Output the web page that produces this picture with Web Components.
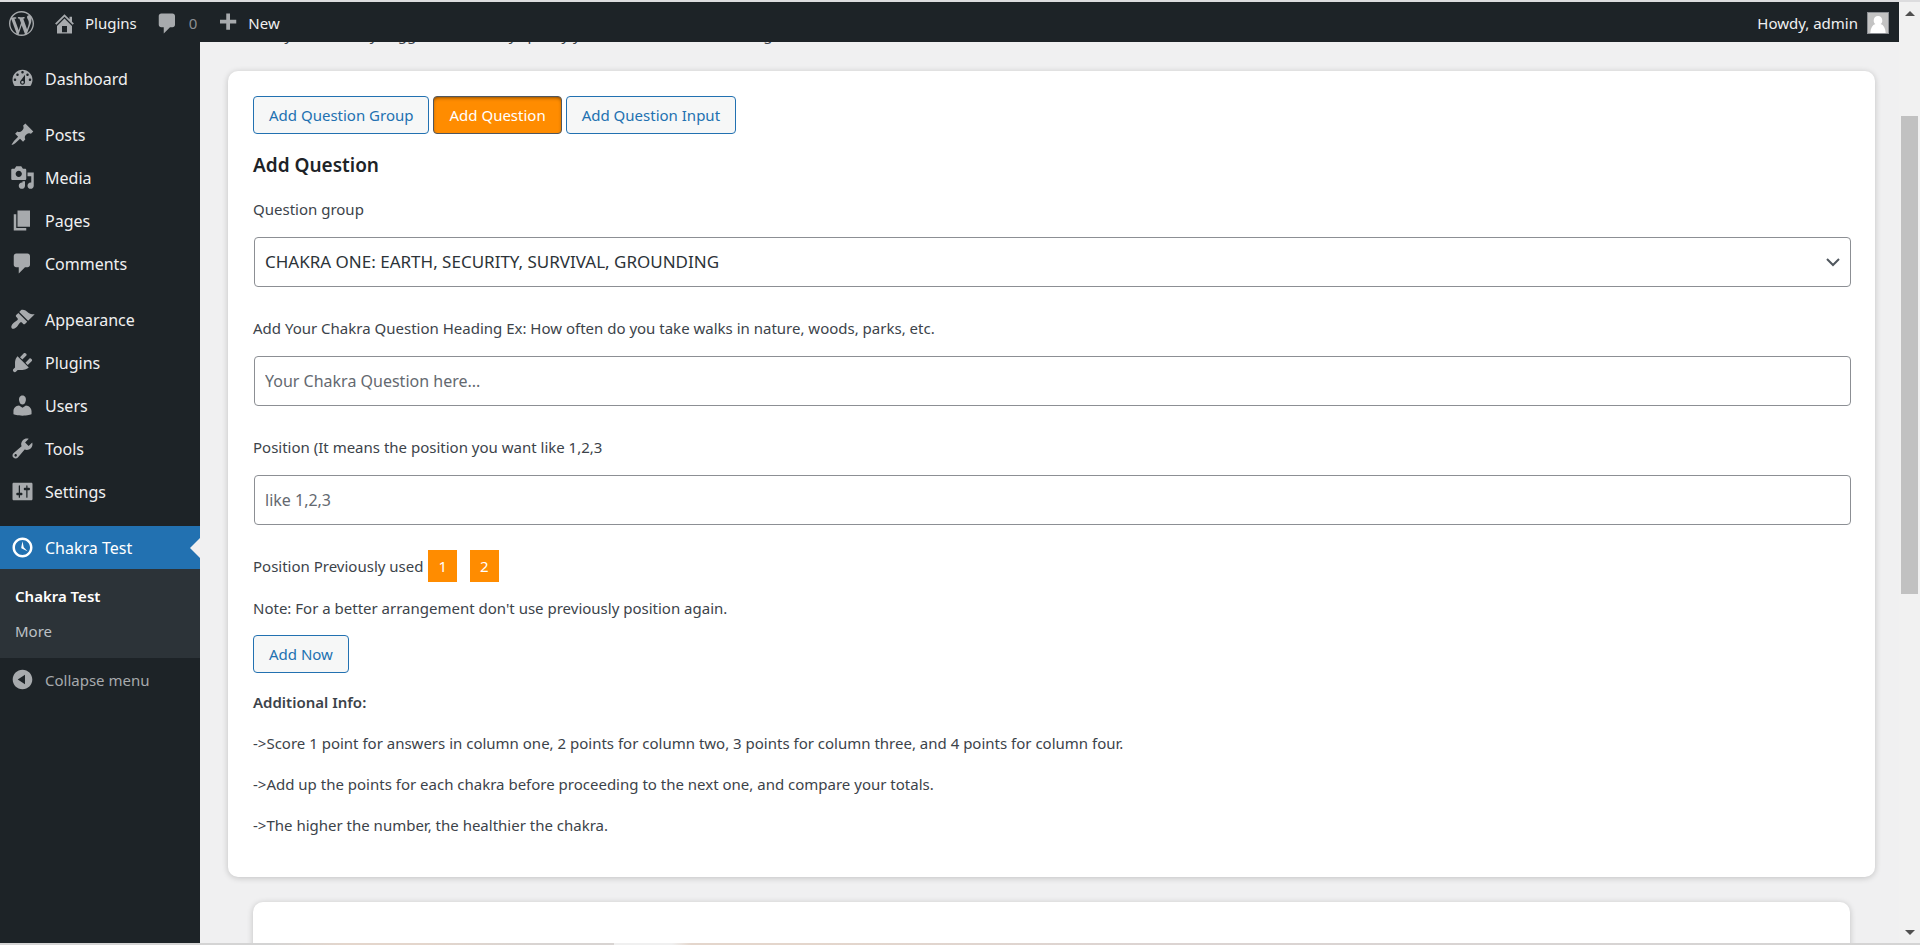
<!DOCTYPE html>
<html lang="en">
<head>
<meta charset="utf-8">
<title>Chakra Test</title>
<style>
	body {
		margin: 0;
		font-family: "Noto Sans", "Open Sans", sans-serif;
		font-size: 15px;
		line-height: 24px;
		color: #3c434a;
		background: #f0f0f1;
	}
</style>
</head>
<body>
<chakra-app></chakra-app>

<script>
const ICONS = {
	wordpress: 'M20 10c0-5.51-4.49-10-10-10C4.48 0 0 4.49 0 10c0 5.52 4.48 10 10 10 5.51 0 10-4.48 10-10zM7.78 15.37L4.37 6.22c.55-.02 1.17-.08 1.17-.08.5-.06.44-1.13-.06-1.11 0 0-1.45.11-2.37.11-.18 0-.37 0-.58-.01C4.12 2.69 6.87 1.11 10 1.11c2.33 0 4.45.87 6.05 2.34-.68-.11-1.65.39-1.65 1.58 0 .74.45 1.36.9 2.1.35.61.55 1.36.55 2.46 0 1.49-1.4 5-1.4 5l-3.03-8.37c.54-.02.82-.17.82-.17.5-.05.44-1.25-.06-1.22 0 0-1.44.12-2.38.12-.87 0-2.33-.12-2.33-.12-.5-.03-.56 1.2-.06 1.22l.92.08 1.26 3.41zM17.41 10c.24-.64.74-1.87.43-4.25.7 1.29 1.05 2.71 1.05 4.25 0 3.29-1.73 6.24-4.4 7.78.97-2.59 1.94-5.2 2.92-7.78zM6.1 18.09C3.12 16.65 1.11 13.53 1.11 10c0-1.3.23-2.48.72-3.59C3.25 10.3 4.67 14.2 6.1 18.09zm4.03-6.63l2.58 6.98c-.86.29-1.76.45-2.71.45-.79 0-1.57-.11-2.29-.33.81-2.38 1.62-4.74 2.42-7.1z',
	home: 'M16 8.5l1.53 1.53-1.06 1.06L10 4.6l-6.47 6.49-1.06-1.06L10 2.5l4 4v-2h2v4zm-6-2.46l6 5.99V18H4v-5.97zM12 17v-5H8v5h4z',
	comments: 'M5 2h9c1.1 0 2 .9 2 2v7c0 1.1-.9 2-2 2h-2l-5 5v-5H5c-1.1 0-2-.9-2-2V4c0-1.1.9-2 2-2z',
	plus: 'M17 7v3h-5v5H9v-5H4V7h5V2h3v5h5z',
	dashboard: 'M3.76 16h12.48c1.1-1.37 1.76-3.11 1.76-5 0-4.42-3.58-8-8-8s-8 3.58-8 8c0 1.89.66 3.63 1.76 5zM10 4c.55 0 1 .45 1 1s-.45 1-1 1-1-.45-1-1 .45-1 1-1zM6 6c.55 0 1 .45 1 1s-.45 1-1 1-1-.45-1-1 .45-1 1-1zm8 0c.55 0 1 .45 1 1s-.45 1-1 1-1-.45-1-1 .45-1 1-1zm-5.37 5.55L12 7v6c0 1.1-.9 2-2 2s-2-.9-2-2c0-.57.24-1.08.63-1.45zM4 10c.55 0 1 .45 1 1s-.45 1-1 1-1-.45-1-1 .45-1 1-1zm12 0c.55 0 1 .45 1 1s-.45 1-1 1-1-.45-1-1 .45-1 1-1zm-5 3c0-.55-.45-1-1-1s-1 .45-1 1 .45 1 1 1 1-.45 1-1z',
	posts: 'M10.44 3.02l1.82-1.82 6.36 6.35-1.83 1.82c-1.05-.68-2.48-.57-3.41.36l-.75.75c-.92.93-1.04 2.35-.35 3.41l-1.83 1.82-2.41-2.41-2.8 2.79c-.42.42-3.38 2.71-3.8 2.29s1.86-3.39 2.28-3.81l2.79-2.79L4.1 9.36l1.83-1.82c1.05.69 2.48.57 3.4-.36l.75-.75c.93-.92 1.05-2.35.36-3.41z',
	media: 'M13 11V4c0-.55-.45-1-1-1h-1.67L9 1H5L3.67 3H2c-.55 0-1 .45-1 1v7c0 .55.45 1 1 1h10c.55 0 1-.45 1-1zM7 4.5c1.38 0 2.5 1.12 2.5 2.5S8.38 9.5 7 9.5 4.5 8.38 4.5 7 5.62 4.5 7 4.5zM14 6h5v10.5c0 1.38-1.12 2.5-2.5 2.5S14 17.88 14 16.5s1.12-2.5 2.5-2.5c.17 0 .34.02.5.05V9h-3V6zm-4 8.05V13h2v3.5c0 1.38-1.12 2.5-2.5 2.5S7 17.88 7 16.5 8.12 14 9.5 14c.17 0 .34.02.5.05z',
	pages: 'M6 15V2h10v13H6zm-1 1h8v2H3V5h2v11z',
	appearance: 'M14.48 11.06L7.41 3.99l1.5-1.5c.5-.56 2.3-.47 3.51.32 1.21.8 1.43 1.28 2.91 2.1 1.18.64 2.45 1.26 4.45.85zm-.71.71L6.7 4.7 4.93 6.47c-.39.39-.39 1.02 0 1.41l1.06 1.06c.39.39.39 1.03 0 1.42-.6.6-1.43 1.11-2.21 1.69-.35.26-.7.53-1.01.84C1.43 14.23.4 16.08 1.4 17.07c.99 1 2.84-.03 4.18-1.36.31-.31.58-.66.85-1.02.57-.78 1.08-1.61 1.69-2.21.39-.39 1.02-.39 1.41 0l1.06 1.06c.39.39 1.02.39 1.41 0z',
	plugins: 'M13.11 4.36L9.87 7.6 8 5.73l3.24-3.24c.35-.34 1.05-.2 1.56.32.52.51.66 1.21.31 1.55zm-8 1.77l.91-1.12 9.01 9.01-1.19.84c-.71.71-2.63 1.16-3.82 1.16H6.14L4.9 17.26c-.59.59-1.54.59-2.12 0-.59-.58-.59-1.53 0-2.12l1.24-1.24v-3.88c0-1.13.4-3.19 1.09-3.89zm7.26 3.97l3.24-3.24c.34-.35 1.04-.21 1.55.31.52.51.66 1.21.31 1.55l-3.24 3.25z',
	users: 'M10 9.25c-2.27 0-2.73-3.44-2.73-3.44C7 4.02 7.82 2 9.97 2c2.16 0 2.98 2.02 2.71 3.81 0 0-.41 3.44-2.68 3.44zm0 2.57L12.72 10c2.39 0 4.52 2.33 4.52 4.53v2.49s-3.65 1.13-7.24 1.13c-3.65 0-7.24-1.13-7.24-1.13v-2.49c0-2.25 1.94-4.48 4.47-4.48z',
	tools: 'M16.68 9.77c-1.34 1.34-3.3 1.67-4.95.99l-5.41 6.52c-.99.99-2.59.99-3.58 0s-.99-2.59 0-3.57l6.52-5.42c-.68-1.65-.35-3.61.99-4.95 1.28-1.28 3.12-1.62 4.72-1.06l-2.89 2.89 2.82 2.82 2.86-2.87c.53 1.58.18 3.39-1.08 4.65zM3.81 16.21c.4.39 1.04.39 1.43 0 .4-.4.4-1.04 0-1.43-.39-.4-1.03-.4-1.43 0-.39.39-.39 1.03 0 1.43z',
	settings: 'M18 16V4c0-.55-.45-1-1-1H3c-.55 0-1 .45-1 1v12c0 .55.45 1 1 1h14c.55 0 1-.45 1-1zM8 11h1c.55 0 1 .45 1 1s-.45 1-1 1H8v1.5c0 .28-.22.5-.5.5s-.5-.22-.5-.5V13H6c-.55 0-1-.45-1-1s.45-1 1-1h1V5.5c0-.28.22-.5.5-.5s.5.22.5.5V11zm5-2h-1c-.55 0-1-.45-1-1s.45-1 1-1h1V5.5c0-.28.22-.5.5-.5s.5.22.5.5V7h1c.55 0 1 .45 1 1s-.45 1-1 1h-1v5.5c0 .28-.22.5-.5.5s-.5-.22-.5-.5V9z',
	clock: 'M10 2c4.42 0 8 3.58 8 8s-3.58 8-8 8-8-3.58-8-8 3.58-8 8-8zm0 14c3.31 0 6-2.69 6-6s-2.69-6-6-6-6 2.69-6 6 2.69 6 6 6zm-.71-5.29c.07.05.14.1.23.15l-.02.02L14 13l-3.03-3.19L10 5l-.97 4.81h.01c0 .02-.01.05-.02.09S9 9.97 9 10c0 .28.1.52.29.71z',
	collapse: 'M10 2.16c4.33 0 7.84 3.51 7.84 7.84s-3.51 7.84-7.84 7.84S2.16 14.33 2.16 10 5.67 2.16 10 2.16zm2 11.72V6.12L6.18 9.97z'
};

const MENU = [
	[['dashboard', 'Dashboard']],
	[['posts', 'Posts'], ['media', 'Media'], ['pages', 'Pages'], ['comments', 'Comments']],
	[['appearance', 'Appearance'], ['plugins', 'Plugins'], ['users', 'Users'], ['tools', 'Tools'], ['settings', 'Settings']]
];

class WpIcon extends HTMLElement {
	connectedCallback() {
		this.attachShadow({ mode: 'open' }).innerHTML = `
			<style>
				:host {
					display: block;
					flex: none;
					width: 25px;
					height: 25px;
				}
				svg {
					display: block;
					fill: currentColor;
				}
			</style>
			<svg width="25" height="25" viewBox="0 0 20 20" aria-hidden="true">
				<path fill-rule="evenodd" d="${ICONS[this.getAttribute('name')]}"/>
			</svg>
		`;
	}
}

class AdminBar extends HTMLElement {
	constructor() {
		super();
		this.attachShadow({ mode: 'open' }).innerHTML = `
			<style>
				:host {
					display: flex;
					justify-content: space-between;
					height: 40px;
					padding: 2px 10px 0 9px;
					box-sizing: border-box;
					background: #1d2327;
					z-index: 1;
				}
				nav {
					display: flex;
					gap: 18px;
				}
				a {
					display: flex;
					align-items: center;
					color: #f0f0f1;
					text-decoration: none;
				}
				wp-icon {
					color: #a7aaad;
				}
				.home,
				.new {
					gap: 8px;
				}
				.comments {
					gap: 9px;
					color: #8c8f94;
				}
				.user {
					gap: 9px;
				}
				.avatar {
					display: block;
					border: 1px solid #8c8f94;
					background: #c3c3c3;
				}
			</style>
			<nav aria-label="Toolbar">
				<a href="#" aria-label="About WordPress"><wp-icon name="wordpress"></wp-icon></a>
				<a class="home" href="#"><wp-icon name="home"></wp-icon>Plugins</a>
				<a class="comments" href="#"><wp-icon name="comments"></wp-icon>0</a>
				<a class="new" href="#"><wp-icon name="plus"></wp-icon>New</a>
			</nav>
			<a class="user" href="#">Howdy, admin
				<svg class="avatar" width="20" height="20" viewBox="0 0 20 20" aria-hidden="true">
					<path fill="#fff" d="M10 3c2.600 0 4.300 1.900 4.300 4.400 0 1.600-.7 2.900-1.700 3.700 3 1 4.700 4 5.100 8.900H2.300c.4-4.900 2.100-7.900 5.100-8.900-1-.8-1.700-2.100-1.700-3.700C5.700 4.900 7.400 3 10 3z"/>
				</svg>
			</a>
		`;
	}
}

class AdminMenu extends HTMLElement {
	constructor() {
		super();
		const groups = MENU.map(items => `
			<ul>
				${items.map(([icon, label]) => `<li><a class="item" href="#"><wp-icon name="${icon}"></wp-icon>${label}</a></li>`).join('')}
			</ul>
		`).join('');

		this.attachShadow({ mode: 'open' }).innerHTML = `
			<style>
				:host {
					display: block;
					flex: none;
					width: 200px;
					padding-top: 15px;
					box-sizing: border-box;
					background: #1d2327;
				}
				ul {
					list-style: none;
					margin: 0 0 13px;
					padding: 0;
				}
				a,
				button {
					color: #f0f0f1;
					text-decoration: none;
				}
				.item {
					display: flex;
					align-items: center;
					gap: 10px;
					width: 100%;
					height: 43px;
					padding: 0 0 0 10px;
					box-sizing: border-box;
					font-size: 16px;
				}
				wp-icon {
					color: #a7aaad;
				}
				.current {
					position: relative;
					color: #fff;
					background: #2271b1;
				}
				.current wp-icon {
					color: #fff;
				}
				.current::after {
					content: "";
					position: absolute;
					right: 0;
					border: 10px solid transparent;
					border-right-color: #f0f0f1;
					border-left: 0;
				}
				.sub {
					margin: 0;
					padding: 10px 0 9px;
					background: #2c3338;
				}
				.sub a {
					display: block;
					padding: 5px 15px;
					line-height: 25px;
					color: #bcc1c6;
				}
				.sub .active {
					color: #fff;
					font-weight: 600;
				}
				button {
					border: 0;
					background: none;
					font: inherit;
				}
				.collapse {
					font-size: 15px;
					color: #a7aaad;
				}
			</style>
			<nav aria-label="Main menu">
				${groups}
				<a class="item current" href="#"><wp-icon name="clock"></wp-icon>Chakra Test</a>
				<ul class="sub">
					<li><a class="active" href="#">Chakra Test</a></li>
					<li><a href="#">More</a></li>
				</ul>
				<button class="item collapse" type="button"><wp-icon name="collapse"></wp-icon>Collapse menu</button>
			</nav>
		`;
	}
}

class WpButton extends HTMLElement {
	constructor() {
		super();
		this.attachShadow({ mode: 'open' }).innerHTML = `
			<style>
				:host {
					display: block;
				}
				button {
					display: block;
					height: 38px;
					padding: 0 15px;
					border: 1px solid #2271b1;
					border-radius: 4px;
					background: #f6f7f7;
					color: #2271b1;
					font: inherit;
				}
				:host([active]) button {
					border-color: #50575e;
					background: #ff8c00;
					color: #fff;
					box-shadow: inset 0 2px 5px -3px #000;
				}
			</style>
			<button type="button"><slot></slot></button>
		`;
	}
}

class FormField extends HTMLElement {
	connectedCallback() {
		const label = this.getAttribute('label');
		const option = this.getAttribute('option');
		const control = option
			? `<select id="control"><option>${option}</option></select>
			   <svg width="16" height="10" viewBox="0 0 16 10" aria-hidden="true"><path d="M2 2l6 6 6-6"/></svg>`
			: `<input id="control" type="text" placeholder="${this.getAttribute('placeholder')}">`;

		this.attachShadow({ mode: 'open' }).innerHTML = `
			<style>
				:host {
					display: flex;
					flex-direction: column;
					gap: 16px;
				}
				.control {
					display: grid;
					align-items: center;
					padding-left: 1px;
				}
				select,
				input,
				svg {
					grid-area: 1 / 1;
				}
				select,
				input {
					width: 100%;
					height: 50px;
					padding: 0 10px;
					box-sizing: border-box;
					border: 1px solid #8c8f94;
					border-radius: 4px;
					background: #fff;
					color: #2c3338;
					font: inherit;
					font-size: 16px;
					appearance: none;
				}
				select {
					font-size: 17px;
				}
				::placeholder {
					color: #646970;
					opacity: 1;
				}
				svg {
					justify-self: end;
					margin-right: 10px;
					fill: none;
					stroke: #50575e;
					stroke-width: 2;
					pointer-events: none;
				}
			</style>
			<label for="control">${label}</label>
			<div class="control">${control}</div>
		`;
	}
}

class WpCard extends HTMLElement {
	constructor() {
		super();
		this.attachShadow({ mode: 'open' }).innerHTML = `
			<style>
				:host {
					display: block;
					padding: 25px 24px 40px 25px;
					border-radius: 10px;
					background: #fff;
					box-shadow: 0 1px 6px rgba(0, 0, 0, .2);
				}
			</style>
			<slot></slot>
		`;
	}
}

class QuestionForm extends HTMLElement {
	constructor() {
		super();
		this.attachShadow({ mode: 'open' }).innerHTML = `
			<style>
				:host {
					display: block;
				}
				.tabs {
					display: flex;
					gap: 4px;
				}
				h2 {
					margin: 19px 0 20px;
					color: #1d2327;
					font-size: 19px;
					font-weight: 600;
				}
				.fields {
					display: flex;
					flex-direction: column;
					gap: 29px;
				}
				.used {
					display: flex;
					align-items: center;
					gap: 13px;
					margin: 25px 0 14px;
				}
				.used span {
					padding: 4px 10px;
					background: #ff8c00;
					color: #fff;
				}
				.used span:first-of-type {
					margin-left: -8px;
				}
				p {
					margin: 0 0 17px;
				}
				.note {
					margin-bottom: 15px;
				}
				.send {
					display: flex;
					margin-bottom: 17px;
				}
				p:last-child {
					margin: 0;
				}
				strong {
					font-weight: 600;
				}
			</style>
			<div class="tabs">
				<wp-button>Add Question Group</wp-button>
				<wp-button active>Add Question</wp-button>
				<wp-button>Add Question Input</wp-button>
			</div>
			<h2>Add Question</h2>
			<div class="fields">
				<form-field label="Question group" option="CHAKRA ONE: EARTH, SECURITY, SURVIVAL, GROUNDING"></form-field>
				<form-field label="Add Your Chakra Question Heading Ex: How often do you take walks in nature, woods, parks, etc." placeholder="Your Chakra Question here..."></form-field>
				<form-field label="Position (It means the position you want like 1,2,3" placeholder="like 1,2,3"></form-field>
			</div>
			<div class="used">Position Previously used <span>1</span><span>2</span></div>
			<p class="note">Note: For a better arrangement don't use previously position again.</p>
			<div class="send"><wp-button>Add Now</wp-button></div>
			<p><strong>Additional Info:</strong></p>
			<p>-&gt;Score 1 point for answers in column one, 2 points for column two, 3 points for column three, and 4 points for column four.</p>
			<p>-&gt;Add up the points for each chakra before proceeding to the next one, and compare your totals.</p>
			<p>-&gt;The higher the number, the healthier the chakra.</p>
		`;
	}
}

class ScrollTrack extends HTMLElement {
	constructor() {
		super();
		this.attachShadow({ mode: 'open' }).innerHTML = `
			<style>
				:host {
					display: flex;
					flex-direction: column;
					align-items: center;
					flex: none;
					width: 21px;
					padding: 9px 0 8px;
					box-sizing: border-box;
					background: #f1f1f1;
				}
				.rail {
					flex: 1;
					display: flex;
					flex-direction: column;
					padding: 100px 0;
				}
				.thumb {
					width: 17px;
					height: 67%;
					background: #c1c1c1;
				}
				svg {
					fill: #505050;
				}
			</style>
			<svg width="10" height="5" aria-hidden="true"><path d="M0 5l5-5 5 5z"/></svg>
			<div class="rail"><div class="thumb"></div></div>
			<svg width="10" height="5" aria-hidden="true"><path d="M0 0l5 5 5-5z"/></svg>
		`;
	}
}

class ChakraApp extends HTMLElement {
	constructor() {
		super();
		this.attachShadow({ mode: 'open' }).innerHTML = `
			<style>
				:host {
					display: flex;
					flex-direction: column;
					height: 100vh;
					box-sizing: border-box;
					border-top: 2px solid #dcdcde;
					overflow: hidden;
				}
				.window {
					flex: 1;
					display: flex;
					min-height: 0;
				}
				.page {
					flex: 1;
					display: flex;
					flex-direction: column;
					min-width: 0;
				}
				.body {
					flex: 1;
					display: flex;
					min-height: 0;
				}
				main {
					flex: 1;
					min-width: 0;
					padding: 0 24px 0 28px;
					overflow: hidden;
				}
				/* content scrolled under the admin bar */
				.scrolled {
					display: flex;
					flex-direction: column;
					gap: 25px;
					margin-top: -20px;
				}
				p {
					margin: 0;
				}
				.next {
					height: 100px;
					margin: 0 25px;
				}
				.edge {
					height: 2px;
					background: linear-gradient(90deg, #d4d4d4 14%, #e4d6cc 18%, #e4d6cc 22%, #d8d4d2 28%, #d8d4d2 32%, #f0f0f0 32%, #f0f0f0 35%, #e4d6cc 36%, #e4d6cc 42%, #dcd4d2 60%, #d4d4d4);
				}
			</style>
			<div class="window">
				<div class="page">
					<admin-bar></admin-bar>
					<div class="body">
						<admin-menu></admin-menu>
						<main>
							<div class="scrolled">
								<p>Note: If you have any suggestions, kindly specify your needs in a new message</p>
								<wp-card><question-form></question-form></wp-card>
								<wp-card class="next"></wp-card>
							</div>
						</main>
					</div>
				</div>
				<scroll-track></scroll-track>
			</div>
			<div class="edge"></div>
		`;
	}
}

customElements.define('wp-icon', WpIcon);
customElements.define('wp-button', WpButton);
customElements.define('wp-card', WpCard);
customElements.define('form-field', FormField);
customElements.define('question-form', QuestionForm);
customElements.define('admin-bar', AdminBar);
customElements.define('admin-menu', AdminMenu);
customElements.define('scroll-track', ScrollTrack);
customElements.define('chakra-app', ChakraApp);
</script>
</body>
</html>
